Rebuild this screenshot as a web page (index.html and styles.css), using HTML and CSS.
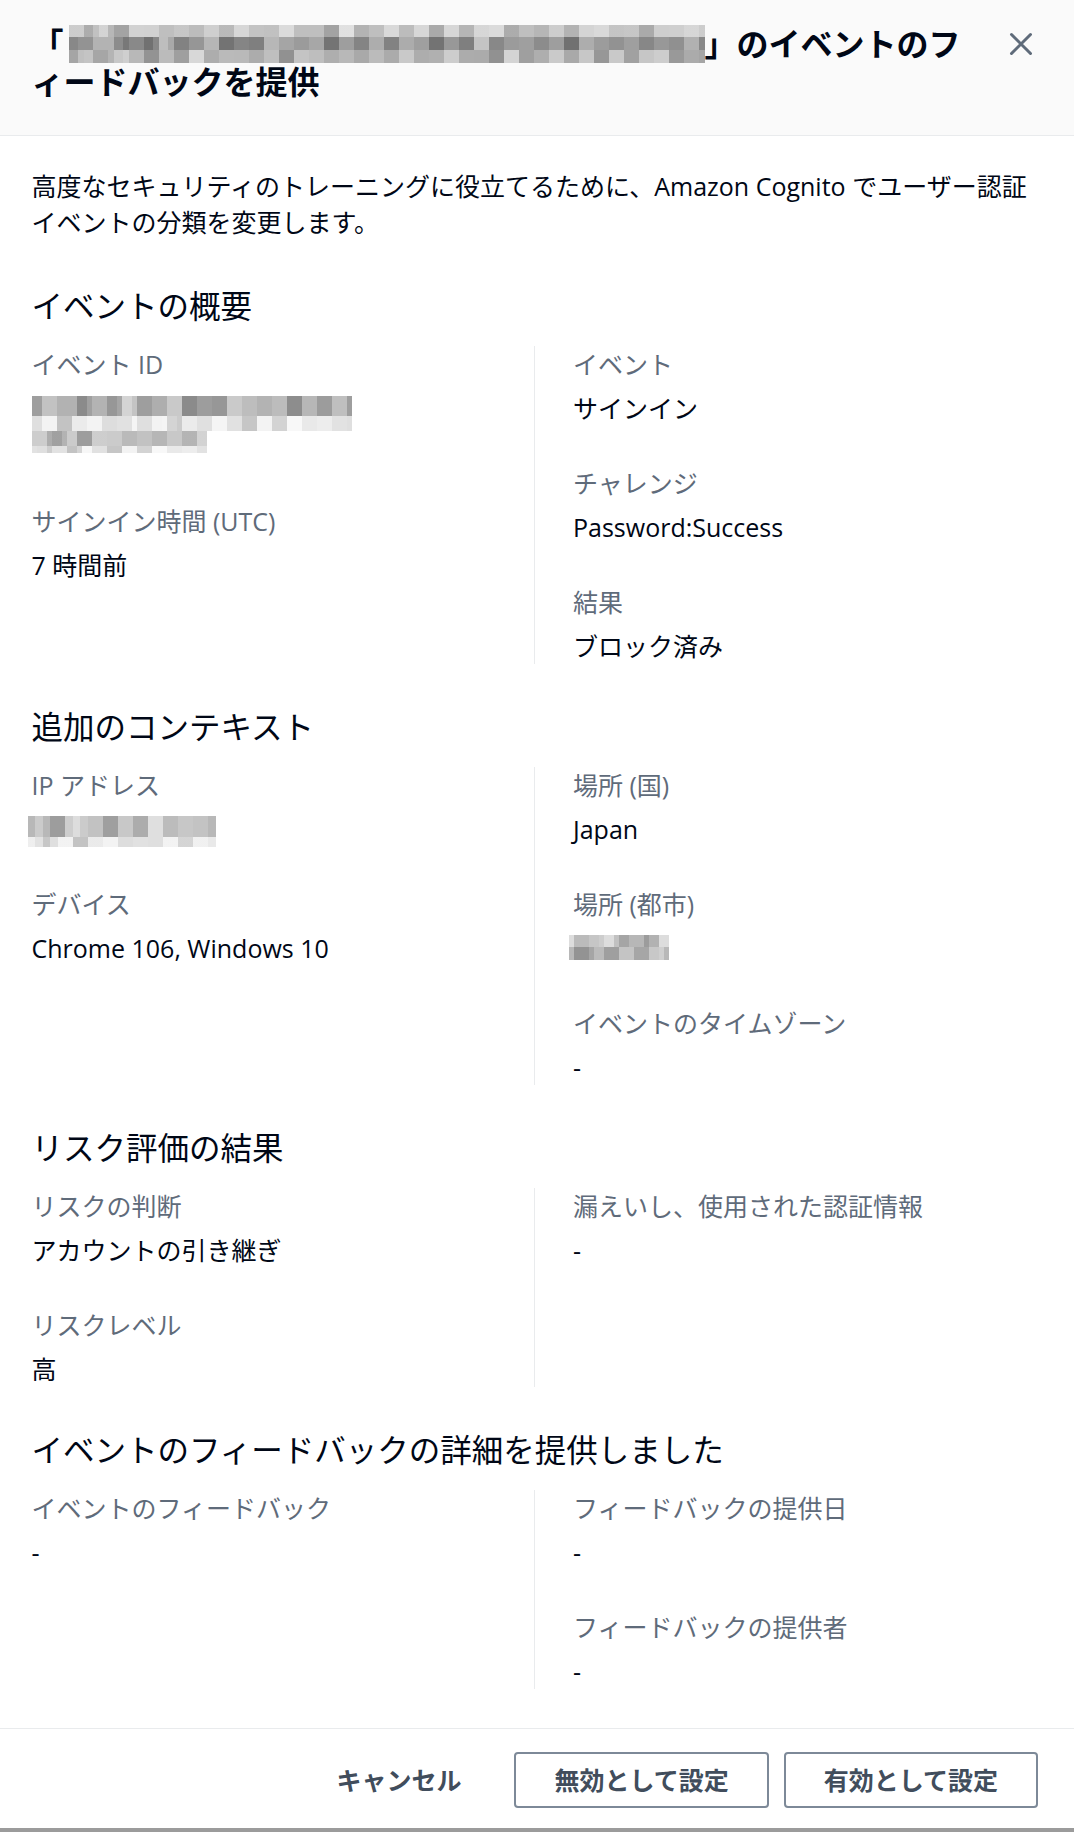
FILE: index.html
```html
<!DOCTYPE html>
<html lang="ja">
<head>
<meta charset="utf-8">
<title>イベントのフィードバックを提供</title>
<link rel="stylesheet" href="styles.css">
</head>
<body>
<div class="modal">
  <header class="modal-header">
    <h1 class="modal-title"><span>「</span><span class="mosaic mosaic-title"><span class="mrow h12 g-light o1"></span><span class="mrow h13 g-dark o2"></span><span class="mrow h13 g-mid o3"></span></span><span>」のイベントのフ</span><span>ィードバックを提供</span></h1>
    <button class="close" type="button" aria-label="閉じる">
      <svg width="24" height="24" viewBox="0 0 24 24" aria-hidden="true"><path d="M2.5 2.5 21.5 21.5M21.5 2.5 2.5 21.5" fill="none" stroke="#5f6b7a" stroke-width="3" stroke-linecap="round"/></svg>
    </button>
  </header>

  <div class="modal-body">
    <p class="intro">高度なセキュリティのトレーニングに役立てるために、Amazon Cognito でユーザー認証イベントの分類を変更します。</p>

    <section class="section">
      <h2 class="section-title">イベントの概要</h2>
      <div class="cols">
        <div class="col">
          <div class="kv">
            <div class="label">イベント ID</div>
            <div class="value value-2line">
              <span class="mosaic mosaic-id"><span class="mrow h20 g-mid2 o2"></span><span class="mrow h15 g-faint o4"></span><span class="mrow h15 g-lightmid o1 w175"></span><span class="mrow h7 g-faint o3 w175"></span></span>
            </div>
          </div>
          <div class="kv">
            <div class="label">サインイン時間 (UTC)</div>
            <div class="value">7 時間前</div>
          </div>
        </div>
        <div class="col col-divided">
          <div class="kv">
            <div class="label">イベント</div>
            <div class="value">サインイン</div>
          </div>
          <div class="kv">
            <div class="label">チャレンジ</div>
            <div class="value">Password:Success</div>
          </div>
          <div class="kv">
            <div class="label">結果</div>
            <div class="value">ブロック済み</div>
          </div>
        </div>
      </div>
    </section>

    <section class="section">
      <h2 class="section-title">追加のコンテキスト</h2>
      <div class="cols">
        <div class="col">
          <div class="kv">
            <div class="label">IP アドレス</div>
            <div class="value"><span class="mosaic mosaic-ip"><span class="mrow h21 g-lightmid o3"></span><span class="mrow h10 g-faint o1"></span></span></div>
          </div>
          <div class="kv">
            <div class="label">デバイス</div>
            <div class="value">Chrome 106, Windows 10</div>
          </div>
        </div>
        <div class="col col-divided">
          <div class="kv">
            <div class="label">場所 (国)</div>
            <div class="value">Japan</div>
          </div>
          <div class="kv">
            <div class="label">場所 (都市)</div>
            <div class="value"><span class="mosaic mosaic-city"><span class="mrow h12 g-light o2"></span><span class="mrow h13 g-mid o4"></span></span></div>
          </div>
          <div class="kv">
            <div class="label">イベントのタイムゾーン</div>
            <div class="value">-</div>
          </div>
        </div>
      </div>
    </section>

    <section class="section">
      <h2 class="section-title">リスク評価の結果</h2>
      <div class="cols">
        <div class="col">
          <div class="kv">
            <div class="label">リスクの判断</div>
            <div class="value">アカウントの引き継ぎ</div>
          </div>
          <div class="kv">
            <div class="label">リスクレベル</div>
            <div class="value">高</div>
          </div>
        </div>
        <div class="col col-divided">
          <div class="kv">
            <div class="label">漏えいし、使用された認証情報</div>
            <div class="value">-</div>
          </div>
        </div>
      </div>
    </section>

    <section class="section">
      <h2 class="section-title">イベントのフィードバックの詳細を提供しました</h2>
      <div class="cols">
        <div class="col">
          <div class="kv">
            <div class="label">イベントのフィードバック</div>
            <div class="value">-</div>
          </div>
        </div>
        <div class="col col-divided">
          <div class="kv">
            <div class="label">フィードバックの提供日</div>
            <div class="value">-</div>
          </div>
          <div class="kv">
            <div class="label">フィードバックの提供者</div>
            <div class="value">-</div>
          </div>
        </div>
      </div>
    </section>
  </div>

  <footer class="modal-footer">
    <button class="btn btn-link" type="button">キャンセル</button>
    <button class="btn" type="button">無効として設定</button>
    <button class="btn" type="button">有効として設定</button>
  </footer>
</div>
</body>
</html>
```

FILE: styles.css
```css
html {
  background: #9b9b9b;
}

body {
  margin: 0;
  font-family: "Open Sans", "Noto Sans CJK JP", sans-serif;
  color: #000716;
}

.modal {
  background: #ffffff;
  box-shadow: 0 1px 2px rgba(0, 0, 0, 0.45);
}

/* ---------- header ---------- */
.modal-header {
  display: flex;
  align-items: flex-start;
  gap: 25px;
  padding: 25px 41px 34px 31.5px;
  background: #fafafa;
  border-bottom: 1px solid #e9ebed;
}

.modal-title {
  flex: 1;
  margin: 0;
  font-size: 32px;
  line-height: 38px;
  font-weight: 700;
  color: #000716;
  line-break: loose;
}

.close {
  flex: none;
  display: flex;
  margin-top: 7px;
  padding: 0;
  border: 0;
  background: none;
  cursor: pointer;
}

/* ---------- body ---------- */
.modal-body {
  padding: 32px 31.5px 39px;
}

.intro {
  margin: 0 0 47px;
  font-size: 25px;
  line-height: 36px;
}

.section + .section {
  margin-top: 44px;
}

.section-title {
  margin: 0 0 21px;
  font-size: 31.5px;
  line-height: 38px;
  font-weight: 400;
  color: #000716;
}

.cols {
  display: grid;
  grid-template-columns: 502.5px 1fr;
}

.col {
  display: flex;
  flex-direction: column;
  gap: 39px;
}

.col-divided {
  border-left: 1px solid #e9ebed;
  padding-left: 38px;
}

.label {
  margin-bottom: 8px;
  font-size: 25px;
  line-height: 36px;
  color: #5f6b7a;
}

.value {
  font-size: 25px;
  line-height: 36px;
  color: #000716;
}

.value-2line {
  height: 74px;
}

/* ---------- mosaic (pixelated redacted text) ---------- */
.mosaic {
  display: inline-block;
  vertical-align: top;
}

.mrow {
  display: block;
  background-image:
    repeating-linear-gradient(90deg,
      rgba(255,255,255,.26) 0 15px, rgba(0,0,0,.08) 15px 30px,
      rgba(255,255,255,.06) 30px 45px, rgba(0,0,0,.13) 45px 60px,
      rgba(255,255,255,.34) 60px 75px, rgba(0,0,0,0) 75px 90px,
      rgba(255,255,255,.16) 90px 105px),
    repeating-linear-gradient(90deg,
      rgba(0,0,0,.07) 0 30px, rgba(255,255,255,.14) 30px 45px,
      rgba(0,0,0,.11) 45px 75px, rgba(255,255,255,.05) 75px 105px,
      rgba(255,255,255,.22) 105px 120px, rgba(0,0,0,.03) 120px 150px,
      rgba(0,0,0,.10) 150px 165px, rgba(255,255,255,.10) 165px 195px);
}

.o1 { background-position: 0 0, 45px 0; }
.o2 { background-position: 30px 0, 105px 0; }
.o3 { background-position: 60px 0, 15px 0; }
.o4 { background-position: 90px 0, 150px 0; }

.g-light { background-color: #c9c9c9; }
.g-dark { background-color: #8c8c8c; }
.g-mid { background-color: #b3b3b3; }
.g-mid2 { background-color: #aaaaaa; }
.g-lightmid { background-color: #c2c2c2; }
.g-faint { background-color: #f1f1f1; }

.h7 { height: 7px; }
.h10 { height: 10px; }
.h12 { height: 12px; }
.h13 { height: 13px; }
.h15 { height: 15px; }
.h20 { height: 20px; }
.h21 { height: 21px; }

.w175 { width: 175px; }

.mosaic-title {
  width: 636px;
  height: 38px;
  margin-left: 5px;
}

.mosaic-id {
  width: 320px;
  margin-top: 6px;
}

.mosaic-ip {
  width: 188px;
  margin-top: 5px;
  margin-left: -4px;
}

.mosaic-city {
  width: 100px;
  margin-top: 5px;
  margin-left: -4px;
}

/* ---------- footer ---------- */
.modal-footer {
  display: flex;
  justify-content: flex-end;
  gap: 15px;
  padding: 23px 36px 20px;
  border-top: 1px solid #e9ebed;
}

.btn {
  padding: 8px 38px;
  border: 2px solid #7d8998;
  border-radius: 4px;
  background: #ffffff;
  font-family: "Open Sans", "Noto Sans CJK JP", sans-serif;
  font-size: 25px;
  line-height: 36px;
  font-weight: 700;
  color: #414d5c;
  cursor: pointer;
}

.btn-link {
  border-color: transparent;
  padding-right: 36px;
}
```
